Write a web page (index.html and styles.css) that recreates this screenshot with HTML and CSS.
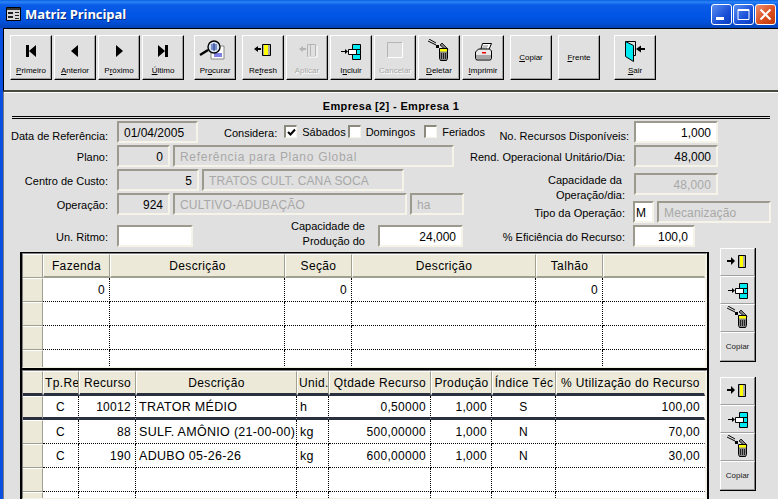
FILE: index.html
```html
<!DOCTYPE html>
<html lang="pt">
<head>
<meta charset="utf-8">
<title>Matriz Principal</title>
<link rel="stylesheet" href="styles.css">
</head>
<body>
<svg class="defs" width="0" height="0">
  <defs>
    <symbol id="i-first" viewBox="0 0 32 24"><path d="M11 6h3v12h-3zM21 6v12l-7-6z"/></symbol>
    <symbol id="i-prev" viewBox="0 0 32 24"><path d="M19 6v12l-7-6z"/></symbol>
    <symbol id="i-next" viewBox="0 0 32 24"><path d="M13 6v12l7-6z"/></symbol>
    <symbol id="i-last" viewBox="0 0 32 24"><path d="M11 6v12l7-6zM18 6h3v12h-3z"/></symbol>
    <symbol id="i-search" viewBox="0 0 32 24">
      <path d="M12 7h13v13H12z" fill="#fff" stroke="#888"/>
      <path d="M15 15h8M15 17h8" stroke="#00c"/>
      <path d="M1 16l8-5" stroke="#000" stroke-width="2.4"/>
      <circle cx="15" cy="8" r="6" fill="#d8e4f0" stroke="#000" stroke-width="1.4"/>
      <path d="M12 6h6M12 8h6M12 10h6M15 4v8" stroke="#1a3a9a"/>
    </symbol>
    <symbol id="i-refresh" viewBox="0 0 32 24">
      <path d="M7 10l4-3v2h3v2h-3v2z"/>
      <path d="M15.500 5.500h8v11h-8z" fill="#a8a8a8" stroke="#000"/>
      <path d="M17 6h4v10h-4z" fill="#ff0"/>
    </symbol>
    <symbol id="i-apply" viewBox="0 0 32 24">
      <path d="M8 10l4 3v-2h3V9h-3V7z" fill="#b4b4b4"/>
      <path d="M16.500 5.500h8v12h-8zM19.500 6v11" fill="none" stroke="#b4b4b4"/>
      <path d="M17 18h9V7" fill="none" stroke="#fff"/>
    </symbol>
    <symbol id="i-add" viewBox="0 0 32 24">
      <path d="M6 12h4v-2l3 2.500-3 2.500v-2H6z"/>
      <path d="M17.500 5.500h8v5h-8zM17.500 15.500h8v5h-8zM21.500 10.500h4v5h-4z" fill="#00e8f0" stroke="#000"/>
      <path d="M13.500 10.500h8v5h-8z" fill="#fff" stroke="#000"/>
    </symbol>
    <symbol id="i-cancel" viewBox="0 0 32 24">
      <path d="M8.500 18.500v-15h15" fill="none" stroke="#b4b4b4"/>
      <path d="M8.500 18.500h15v-15" fill="none" stroke="#fff"/>
    </symbol>
    <symbol id="i-delete" viewBox="0 0 32 24">
      <path d="M5 2l8 4M6 0l7 4" stroke="#000"/>
      <path d="M13 6h3v3h-3z"/>
      <path d="M17 6l2-2 6 6-1 2z" fill="#808080" stroke="#000" stroke-width=".8"/>
      <path d="M16.500 9.500h8v10l-1 2h-6l-1-2z" fill="#888" stroke="#000"/>
      <path d="M17 10h7v2.500h-7z" fill="#ff0"/>
      <path d="M18.500 14v6M20.500 14v6M22.500 14v6" stroke="#222"/>
    </symbol>
    <symbol id="i-print" viewBox="0 0 32 24">
      <path d="M15.500 4.500h9l-3 7h-8z" fill="#fff" stroke="#000"/>
      <path d="M16 7h5M15 9h5" stroke="#888"/>
      <path d="M8.500 13l3-3h11l2 2v7l-1 2h-14l-1-2z" fill="#e8e8e8" stroke="#000"/>
      <path d="M9 16h15v4H9z" fill="#a8a8a8"/>
      <path d="M15 13h4v1.500h-4z" fill="#e00"/>
    </symbol>
    <symbol id="i-door" viewBox="0 0 32 24">
      <path d="M6.500 2.500h10v14h-2" fill="none" stroke="#000"/>
      <path d="M6.500 2.500l8 4v16l-8-5z" fill="#00e8f0" stroke="#000"/>
      <path d="M17 10l5-3.500V9h4v2h-4v2.500z"/>
    </symbol>
    <symbol id="i-s-load" viewBox="0 0 32 24">
      <path d="M5 10h4V7l4 4-4 4v-3H5z"/>
      <path d="M16.500 5.500h7v12h-7z" fill="#a8a8a8" stroke="#000"/>
      <path d="M18 6h3v11h-3z" fill="#ff0"/>
    </symbol>
  </defs>
</svg>

<div class="window">
  <header class="titlebar">
    <svg class="title-icon" width="15" height="14" viewBox="0 0 15 14"><path d="M.5.500h14v13H.5z" fill="#d8d8d8" stroke="#000"/><path d="M1 1h13v2H1z" fill="#333"/><path d="M2 5h5v2H2zM2 9h5v2H2zM9 5h4v1H9zM9 8h4v1H9zM9 11h4v1H9z" fill="#222"/></svg>
    <h1 class="title">Matriz Principal</h1>
    <div class="win-buttons">
      <span class="win-btn"><svg width="21" height="21" viewBox="0 0 21 21"><path d="M5 13h8v3H5z" fill="#fff"/></svg></span>
      <span class="win-btn"><svg width="21" height="21" viewBox="0 0 21 21"><path d="M5 5.500h11v10H5z" fill="none" stroke="#fff"/><path d="M5 5h11v2H5z" fill="#fff"/></svg></span>
      <span class="win-btn win-close"><svg width="21" height="21" viewBox="0 0 21 21"><path d="M5.500 5.500l10 10M15.500 5.500l-10 10" stroke="#fff" stroke-width="2"/></svg></span>
    </div>
  </header>

  <div class="frame">
    <nav class="toolbar">
      <button class="tb"><svg class="ico"><use href="#i-first"/></svg><span><u>P</u>rimeiro</span></button>
      <button class="tb"><svg class="ico"><use href="#i-prev"/></svg><span><u>A</u>nterior</span></button>
      <button class="tb"><svg class="ico"><use href="#i-next"/></svg><span>P<u>r</u>óximo</span></button>
      <button class="tb"><svg class="ico"><use href="#i-last"/></svg><span><u>Ú</u>ltimo</span></button>
      <button class="tb gap-10"><svg class="ico"><use href="#i-search"/></svg><span>Pr<u>o</u>curar</span></button>
      <button class="tb gap-6"><svg class="ico"><use href="#i-refresh"/></svg><span>Re<u>f</u>resh</span></button>
      <button class="tb off"><svg class="ico"><use href="#i-apply"/></svg><span>Aplicar</span></button>
      <button class="tb"><svg class="ico"><use href="#i-add"/></svg><span>I<u>n</u>cluir</span></button>
      <button class="tb off"><svg class="ico"><use href="#i-cancel"/></svg><span>Cancelar</span></button>
      <button class="tb"><svg class="ico"><use href="#i-delete"/></svg><span><u>D</u>eletar</span></button>
      <button class="tb"><svg class="ico"><use href="#i-print"/></svg><span><u>I</u>mprimir</span></button>
      <button class="tb gap-6 tb-text"><span><u>C</u>opiar</span></button>
      <button class="tb gap-6 tb-text"><span><u>F</u>rente</span></button>
      <button class="tb gap-14"><svg class="ico"><use href="#i-door"/></svg><span><u>S</u>air</span></button>
    </nav>

    <main class="content">
      <h2 class="company">Empresa [2] - Empresa 1</h2>

      <section class="form">
        <div class="col-left">
          <div class="row row-date">
            <label class="lab lab-low">Data de Referência:</label>
            <span class="fld w-81">01/04/2005</span>
            <span class="consider">
              <span class="cons-label">Considera:</span>
              <span class="chk checked"><svg width="11" height="11" viewBox="0 0 11 11"><path d="M2 5l2.500 2.500L9 2.500" fill="none" stroke="#000" stroke-width="2"/></svg></span><span class="chk-text t-sab">Sábados</span>
              <span class="chk"></span><span class="chk-text t-dom">Domingos</span>
              <span class="chk"></span><span class="chk-text">Feriados</span>
            </span>
          </div>
          <div class="row row-plano">
            <label class="lab">Plano:</label>
            <span class="fld num ro w-53">0</span>
            <span class="fld off-txt wide w-281">Referência para Plano Global</span>
          </div>
          <div class="row row-cc">
            <label class="lab">Centro de Custo:</label>
            <span class="fld num ro w-82">5</span>
            <span class="fld off-txt w-202">TRATOS CULT. CANA SOCA</span>
          </div>
          <div class="row row-op">
            <label class="lab">Operação:</label>
            <span class="fld num ro w-53">924</span>
            <span class="fld off-txt w-234">CULTIVO-ADUBAÇÃO</span>
            <span class="fld off-txt w-54">ha</span>
          </div>
          <div class="row row-ritmo">
            <label class="lab">Un. Ritmo:</label>
            <span class="fld edit w-76"></span>
            <label class="lab-2">Capacidade de<br>Produção do</label>
            <span class="fld edit num w-85">24,000</span>
          </div>
        </div>
        <div class="col-right">
          <div class="rrow r1"><label class="rlab rlab-low">No. Recursos Disponíveis:</label><span class="fld edit num w-84">1,000</span></div>
          <div class="rrow r2"><label class="rlab">Rend. Operacional Unitário/Dia:</label><span class="fld num ro w-84">48,000</span></div>
          <div class="rrow r3"><label class="rlab rlab-two">Capacidade da&nbsp;<br>Operação/dia:</label><span class="fld num off-txt w-84">48,000</span></div>
          <div class="rrow r4"><label class="rlab rlab-near">Tipo da Operação:</label><span class="fld edit w-21 tight">M</span><span class="fld off-txt w-114">Mecanização</span></div>
          <div class="rrow r5"><label class="rlab rlab-near">% Eficiência do Recurso:</label><span class="fld edit num w-62">100,0</span></div>
        </div>
      </section>

      <section class="lower">
        <div class="grids">
          <div class="grid grid-a">
            <div class="grid-inner">
              <table class="tbl tbl-a">
                <colgroup><col class="c20"><col class="c67"><col class="c175"><col class="c67"><col class="c184"><col class="c67"><col class="c102"></colgroup>
                <thead><tr><th class="ind"></th><th>Fazenda</th><th>Descrição</th><th>Seção</th><th>Descrição</th><th>Talhão</th><th></th></tr></thead>
                <tbody>
                  <tr><td class="ind"></td><td class="r">0</td><td></td><td class="r">0</td><td></td><td class="r">0</td><td></td></tr>
                  <tr><td class="ind"></td><td></td><td></td><td></td><td></td><td></td><td></td></tr>
                  <tr><td class="ind"></td><td></td><td></td><td></td><td></td><td></td><td></td></tr>
                  <tr><td class="ind"></td><td></td><td></td><td></td><td></td><td></td><td></td></tr>
                </tbody>
              </table>
            </div>
          </div>
          <div class="grid grid-b">
            <div class="grid-inner">
              <table class="tbl tbl-b">
                <colgroup><col class="c20"><col class="c36"><col class="c57"><col class="c161"><col class="c32"><col class="c102"><col class="c61"><col class="c64"><col class="c149"></colgroup>
                <thead><tr><th class="ind"></th><th>Tp.Re</th><th>Recurso</th><th>Descrição</th><th>Unid.</th><th>Qtdade Recurso</th><th>Produção</th><th>Índice Téc</th><th>% Utilização do Recurso</th></tr></thead>
                <tbody>
                  <tr class="current"><td class="ind"></td><td class="c">C</td><td class="r">10012</td><td>TRATOR MÉDIO</td><td>h</td><td class="r">0,50000</td><td class="r">1,000</td><td class="c">S</td><td class="r">100,00</td></tr>
                  <tr><td class="ind"></td><td class="c">C</td><td class="r">88</td><td>SULF. AMÔNIO (21-00-00)</td><td>kg</td><td class="r">500,00000</td><td class="r">1,000</td><td class="c">N</td><td class="r">70,00</td></tr>
                  <tr><td class="ind"></td><td class="c">C</td><td class="r">190</td><td>ADUBO 05-26-26</td><td>kg</td><td class="r">600,00000</td><td class="r">1,000</td><td class="c">N</td><td class="r">30,00</td></tr>
                  <tr><td class="ind"></td><td></td><td></td><td></td><td></td><td></td><td></td><td></td><td></td></tr>
                  <tr><td class="ind"></td><td></td><td></td><td></td><td></td><td></td><td></td><td></td><td></td></tr>
                </tbody>
              </table>
            </div>
          </div>
        </div>
        <div class="side">
          <div class="side-group">
            <button class="sb"><svg class="ico"><use href="#i-s-load"/></svg></button>
            <button class="sb"><svg class="ico"><use href="#i-add"/></svg></button>
            <button class="sb"><svg class="ico"><use href="#i-delete"/></svg></button>
            <button class="sb sb-text">Copiar</button>
          </div>
          <div class="side-group second">
            <button class="sb"><svg class="ico"><use href="#i-s-load"/></svg></button>
            <button class="sb"><svg class="ico"><use href="#i-add"/></svg></button>
            <button class="sb"><svg class="ico"><use href="#i-delete"/></svg></button>
            <button class="sb sb-text">Copiar</button>
          </div>
        </div>
      </section>
    </main>
  </div>
</div>
</body>
</html>
```
FILE: styles.css
```css
* { box-sizing: border-box; }
html, body { margin: 0; padding: 0; height: 100%; overflow: hidden; background: #e0e0e0; }
body { font: 12px/14px "Liberation Sans", Arial, sans-serif; color: #000; }
.defs { display: block; height: 0; }

.window { width: 778px; height: 499px; display: flex; flex-direction: column; overflow: hidden; }

/* title bar */
.titlebar {
  height: 28px; flex: none; display: flex; align-items: center; padding: 0 2px 0 6px;
  background: linear-gradient(#0a5fe0 0, #2a84f5 2px, #0a5ce6 5px, #0055e5 16px, #0050d8 22px, #0342b8 28px);
}
.title-icon { flex: none; }
.title { margin: 0 0 0 4px; font: bold 13px/16px "Open Sans", "Liberation Sans", sans-serif; letter-spacing: -.1px; color: #fff; text-shadow: 1px 1px 0 #0a2a80; }
.win-buttons { margin-left: auto; display: flex; gap: 1px; }
.win-btn { width: 21px; height: 21px; border: 1px solid #fff; border-radius: 3px; background: linear-gradient(135deg, #5a8ef0, #1a50d8 60%, #0a3ec0); display: block; overflow: hidden; }
.win-btn svg { display: block; margin: -1px; }
.win-close { background: linear-gradient(135deg, #ec9070, #dc5020 55%, #c03808); }

/* frame */
.frame { flex: 1; min-height: 0; border-left: 3px solid #0a50e0; display: flex; flex-direction: column; }
.toolbar {
  flex: none; height: 64px; display: flex; padding: 6px 0 0 6px;
  border-top: 1px solid #000; border-left: 1px solid #000;
  border-bottom: 2px solid #4a4a40; background: #e0e0e0;
  box-shadow: 0 1px 0 #fff;
}
.tb {
  width: 42px; height: 45px; margin: 0 2px 0 0; padding: 3px 0 0; flex: none;
  display: flex; flex-direction: column; align-items: center;
  background: #e0e0e0; border: 1px solid; border-color: #fff #000 #000 #fff;
  box-shadow: inset -1px -1px 0 #a0a0a0;
  font: 8px/10px "Liberation Sans", sans-serif; color: #000;
}
.tb .ico { width: 32px; height: 24px; display: block; flex: none; }
.tb span { margin-top: 3px; white-space: nowrap; }
.tb-text { justify-content: center; padding: 0; }
.tb-text span { margin: 0; }
.off { color: #a8a8a8; }
.tb.off span { text-shadow: 1px 1px 0 #fff; }
.gap-10 { margin-left: 8px; }
.gap-6 { margin-left: 4px; }
.gap-14 { margin-left: 12px; }

/* form */
.content { flex: 1; min-height: 0; display: flex; flex-direction: column; border-left: 1px solid #808080; }
.company {
  margin: 0 8px; height: 27px; border-bottom: 3px double #000; flex: none;
  font: bold 11px/28px "Liberation Sans", sans-serif; letter-spacing: .35px; text-align: center;
}
.form { flex: none; height: 129px; display: flex; padding-top: 2px; }
.col-left { width: 486px; flex: none; }
.col-right { flex: none; margin-left: -20px; }
.row { display: flex; align-items: flex-start; }
.row-date { height: 24px; }
.row-plano { height: 24px; }
.row-cc { height: 24px; }
.row-op { height: 32px; }
.row-ritmo { height: 24px; }
.lab { width: 104px; flex: none; text-align: right; margin-right: 9px; padding-top: 5px; white-space: nowrap; font-size: 11px; }
.lab-low { padding-top: 8px; letter-spacing: -.05px; }
.lab-2 { width: 169px; text-align: right; flex: none; margin: -6px 13px 0 0; line-height: 15px; font-size: 11px; }

.fld {
  height: 22px; display: block; flex: none; margin-right: 3px; padding: 3px 5px 0; line-height: 15px;
  border: 2px solid; border-color: #9c9a8c #f6f4e8 #f6f4e8 #9c9a8c;
  white-space: nowrap; overflow: hidden;
}
.num { text-align: right; }
.edit { background: #fff; }
.off-txt { color: #a8a8a8; letter-spacing: .15px; }
.wide { letter-spacing: .7px; }
.tight { padding: 3px 0 0 1px; }
.w-21 { width: 21px; } .w-53 { width: 53px; } .w-54 { width: 54px; } .w-62 { width: 62px; }
.w-76 { width: 76px; } .w-81 { width: 81px; } .w-82 { width: 82px; } .w-84 { width: 84px; }
.w-85 { width: 85px; } .w-114 { width: 114px; } .w-202 { width: 202px; } .w-234 { width: 234px; } .w-281 { width: 281px; }

.consider { display: flex; align-items: center; height: 21px; margin-left: 23px; font-size: 11px; }
.cons-label { margin-right: 7px; padding-top: 2px; }
.chk { width: 13px; height: 13px; background: #fff; border: solid; border-color: #8c8a7c #f6f4e8 #f6f4e8 #8c8a7c; border-width: 2px 1px 1px 2px; flex: none; display: block; overflow: hidden; }
.chk svg { display: block; }
.chk-text { margin: 0 4px 0 5px; }
.t-sab { margin-right: 2px; }
.t-dom { margin-right: 9px; }

.rrow { display: flex; align-items: flex-start; height: 24px; }
.r2 { height: 28px; }
.r3 { height: 28px; }
.rlab { width: 155px; text-align: right; flex: none; margin-right: 9px; padding-top: 5px; white-space: nowrap; font-size: 11px; }
.rlab-low { width: 159px; margin-right: 5px; padding-top: 8px; }
.rlab-near { margin-right: 8px; }
.rlab-two { padding-top: 0; line-height: 15px; }

/* lower part */
.lower { flex: 1; min-height: 0; display: flex; padding-left: 16px; }
.grids { width: 689px; flex: none; padding-top: 4px; display: flex; flex-direction: column; }
.grid { border: solid #000; border-width: 1px 2px 0; flex: none; overflow: hidden; }
.grid-a { height: 116px; }
.grid-b { height: 131px; border-top-width: 2px; }
.grid-inner { height: 100%; border: 1px solid #808080; border-bottom-color: #f4f2e4; border-right-color: #f4f2e4; background: #f4f2e4; overflow: hidden; }
.grid-a .grid-inner { height: 115px; }

.tbl { border-collapse: separate; border-spacing: 0; table-layout: fixed; width: 682px; }
.c20 { width: 20px; } .c32 { width: 32px; } .c36 { width: 36px; } .c57 { width: 57px; } .c61 { width: 61px; }
.c64 { width: 64px; } .c67 { width: 67px; } .c102 { width: 102px; } .c149 { width: 149px; } .c161 { width: 161px; }
.c175 { width: 175px; } .c184 { width: 184px; }
.tbl th {
  height: 24px; padding: 0 1px; font-weight: normal; background: #ece9d8; overflow: hidden; white-space: nowrap;
  border-top: 1px solid #fff; border-left: 1px solid #fff; border-right: 1px solid #a0a090; border-bottom: 2px solid #a0a090; letter-spacing: .35px;
}
.tbl td {
  height: 24px; padding: 0 4px 0 3px; background: #fff; overflow: hidden; white-space: nowrap;
  border-right: 1px dotted #000; border-bottom: 1px dotted #000; letter-spacing: .3px;
}
.tbl-a th, .tbl-a td { padding-top: 1px; }
.tbl td:last-child, .tbl th:last-child { border-right-color: transparent; }
.tbl td.ind, .tbl th.ind { background: #ece9d8; border: solid; border-width: 1px 1px 1px 0; border-color: #fff #a0a090 #a0a090 #fff; }
.tbl td.r { text-align: right; font-size: 12px; }
.tbl td.c { text-align: center; font-size: 12px; padding: 0; }
.tbl-b th { height: 25px; border-bottom: 3px solid #2a3040; }
.tbl-b th.ind { border-bottom: 3px solid #2a3040; }
.tbl-b td { font-size: 12.500px; }
.tbl-b .current td { height: 24px; border-bottom: 3px solid #2a3040; }

.side { margin-left: 11px; width: 36px; flex: none; }
.side-group { display: flex; flex-direction: column; border-right: 1px solid #000; border-bottom: 1px solid #000; }
.second { margin-top: 15px; }
.sb {
  height: 28px; width: 35px; padding: 0; background: #e0e0e0; font: 8px/10px "Liberation Sans", sans-serif; color: #222;
  border: 1px solid; border-color: #fff #808080 #a0a0a0 #fff; display: flex; align-items: center; justify-content: center;
}
.sb .ico { width: 32px; height: 24px; display: block; flex: none; }
.sb-text { height: 29px; }
```
